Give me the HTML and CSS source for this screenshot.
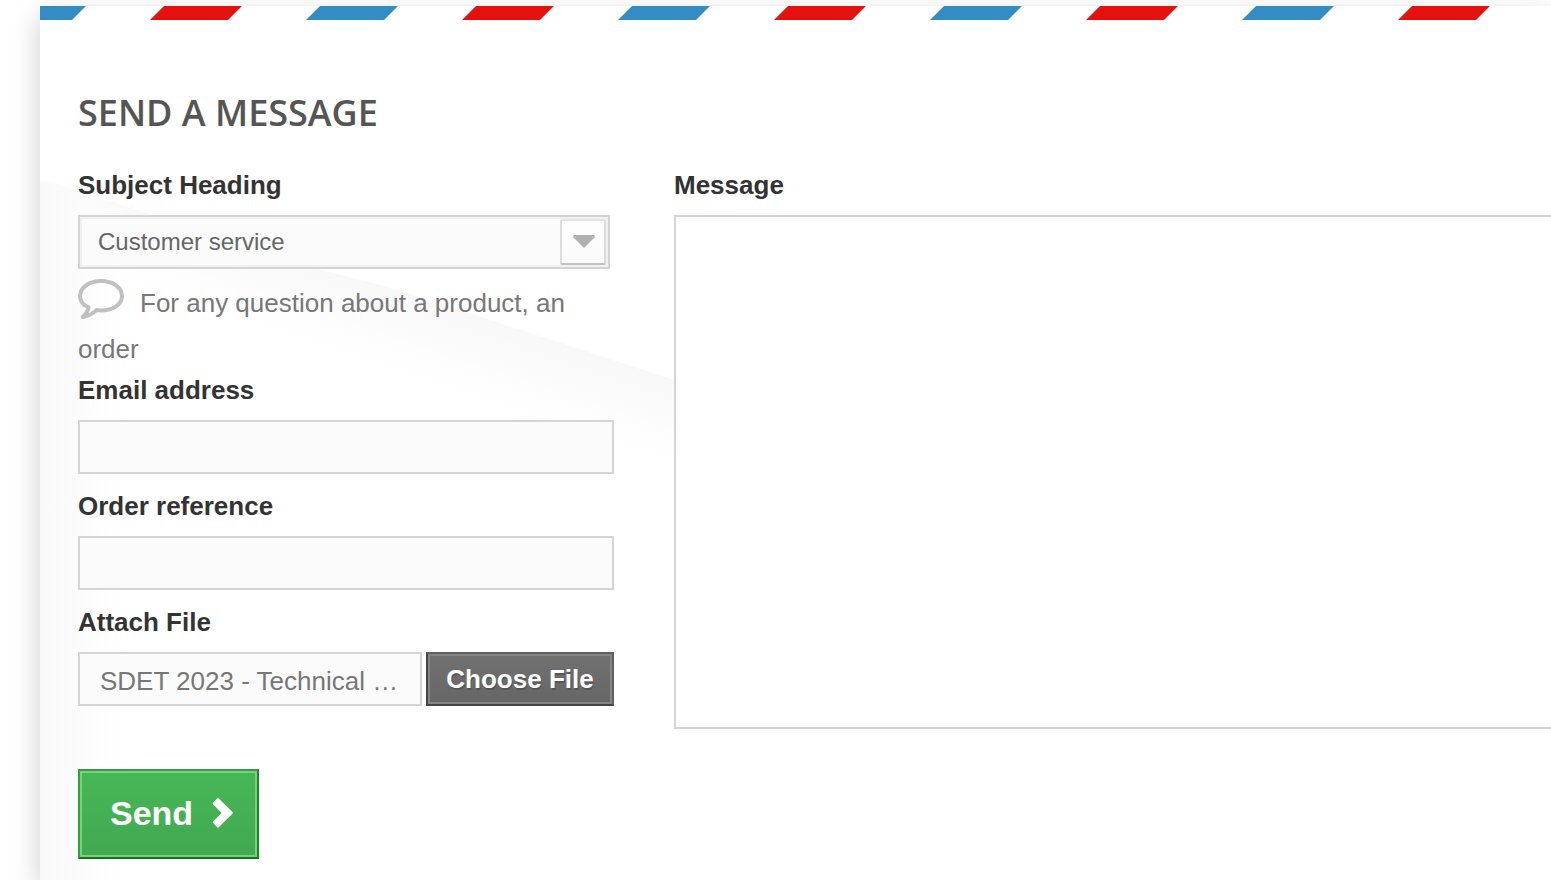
FILE: index.html
```html
<!DOCTYPE html>
<html lang="en">
<head>
<meta charset="utf-8">
<title>Send a message</title>
<link rel="stylesheet" href="styles.css">
</head>
<body>
<form class="panel">
  <svg class="sheen" width="720" height="699" aria-hidden="true">
    <defs>
      <linearGradient id="band" gradientUnits="userSpaceOnUse" x1="360" y1="110" x2="333" y2="192">
        <stop offset="0" stop-color="#f8f8f8"/><stop offset=".5" stop-color="#fcfcfc"/><stop offset="1" stop-color="#fefefe" stop-opacity="0"/>
      </linearGradient>
      <linearGradient id="edge"><stop offset="0" stop-color="#f9f9f9"/><stop offset=".5" stop-color="#fcfcfc"/><stop offset="1" stop-color="#fefefe" stop-opacity="0"/></linearGradient>
    </defs>
    <path d="M0 0C20 1 60 18 112 34C170 53 220 72 272 87C320 98 350 106 389 119L634 199L720 230V699H0Z" fill="url(#band)"/>
    <path d="M0 0C20 1 60 18 90 27V699H0Z" fill="url(#edge)"/>
  </svg>
  <svg class="stripes" width="100%" height="14" aria-hidden="true">
    <defs>
      <pattern id="airmail" x="-46" y="0" width="312" height="14" patternUnits="userSpaceOnUse">
        <path d="M14 0H92L78 14H0Z" fill="#338dc4"/>
        <path d="M170 0H248L234 14H156Z" fill="#e5110e"/>
      </pattern>
    </defs>
    <rect width="100%" height="14" fill="url(#airmail)"/>
  </svg>
  <h3 class="title">Send a message</h3>
  <div class="columns">
    <div class="fields">
      <label class="label">Subject Heading</label>
      <div class="select">
        <span>Customer service</span>
        <span class="select-button"><svg width="22" height="13" viewBox="0 0 22 13"><path d="M1 0H21L22 2L11 13L0 2Z" fill="#b0b0b0"/></svg></span>
      </div>
      <p class="help"><svg class="comment" width="46" height="40" viewBox="0 0 46 40"><path d="M23 2C35 2 44 8.400 44 16.900C44 25.400 35 31.400 23 31.400C21.500 31.400 20 31.300 18.500 31.100C14.500 34.900 10 37.200 4.800 38C7.500 35.400 10 32.500 10.500 28.300C5 25.800 2 22 2 16.900C2 8.400 11 2 23 2Z" fill="none" stroke="#c0c0c0" stroke-width="4" stroke-linejoin="round"/></svg>For any question about a product, an order</p>
      <label class="label">Email address</label>
      <div class="input"></div>
      <label class="label">Order reference</label>
      <div class="input"></div>
      <label class="label">Attach File</label>
      <div class="upload">
        <div class="filename">SDET 2023 - Technical …</div>
        <button type="button" class="choose">Choose File</button>
      </div>
    </div>
    <div class="message">
      <label class="label">Message</label>
      <div class="textarea"></div>
    </div>
  </div>
  <button type="button" class="send"><span>Send</span><svg width="22" height="32" viewBox="0 0 22 32"><path d="M1 5.700L5.200 1.500Q6 .7 6.800 1.500L20.400 15.100Q21.200 15.900 20.400 16.700L6.800 30.300Q6 31.100 5.200 30.300L1 26.100Q.2 25.300 1 24.500L9.600 15.900L1 7.300Q.2 6.500 1 5.700Z" fill="#fff"/></svg></button>
</form>
</body>
</html>
```
FILE: styles.css
```css
* { box-sizing: border-box; }

html, body { height: 100%; overflow: hidden; }

body {
  margin: 0;
  padding: 6px 0 0 40px;
  background: #fff;
  color: #777;
  font: 26px/36px "Liberation Sans", Arial, sans-serif;
}

.panel {
  position: relative;
  isolation: isolate;
  height: 100%;
  background: #fff;
  box-shadow: 0 10px 26px rgba(0, 0, 0, .2), 0 40px 26px -10px rgba(0, 0, 0, .2);
  box-shadow: 0 10px 26px rgba(0, 0, 0, .2);
}

.sheen { position: absolute; left: 0; top: 175px; z-index: -1; }

.stripes { display: block; }

.title {
  margin: 68px 0 0 38px;
  height: 79px;
  color: #555;
  font: 600 36px/50px "Open Sans", sans-serif;
  text-transform: uppercase;
}

.columns { display: flex; gap: 60px; padding-left: 38px; }

.fields { flex: none; width: 536px; }

.message { flex: 1; }

.label {
  display: block;
  margin-bottom: 12px;
  color: #333;
  font-weight: bold;
}

.select {
  display: flex;
  align-items: center;
  justify-content: space-between;
  width: 532px;
  height: 54px;
  padding: 0 2px 0 18px;
  border: 2px solid #d4d4d4;
  box-shadow: inset 0 0 0 2px #f0f0f0;
  background: #fbfbfb;
  color: #666;
  font-size: 24px;
}

.select-button {
  display: flex;
  align-items: center;
  justify-content: center;
  width: 46px;
  height: 46px;
  padding: 0 0 2px 2px;
  border: 2px solid #dcdcdc;
  border-top-color: #e4e4e4;
  border-bottom-color: #c1c1c1;
  border-radius: 2px;
  background: linear-gradient(#fff, #fafafa);
}

.help { margin: 11px 0 0; line-height: 46px; }

.comment { margin-right: 16px; vertical-align: -7px; display: inline-block; height: 40px; margin-top: -10px; }

.input {
  height: 54px;
  margin-bottom: 14px;
  border: 2px solid #d6d4d4;
  background: #fbfbfb;
}

.upload { display: flex; gap: 4px; }

.filename {
  width: 344px;
  height: 54px;
  padding-left: 20px;
  border: 2px solid #d6d4d4;
  background: #fbfbfb;
  line-height: 54px;
  white-space: nowrap;
}

.choose {
  width: 188px;
  height: 54px;
  padding: 0;
  border: 2px solid;
  border-color: #5f5f5f #606060 #444 #444;
  background: linear-gradient(#717171, #666);
  box-shadow: inset 0 0 0 2px #858585;
  color: #fff;
  font: bold 26px/50px "Liberation Sans", Arial, sans-serif;
  text-shadow: 1px 2px rgba(0, 0, 0, .2);
}

.textarea {
  height: 514px;
  border: 2px solid #d6d4d4;
  border-right: 0;
  background: #fff;
}

.send {
  display: flex;
  align-items: center;
  gap: 19px;
  width: 181px;
  height: 90px;
  margin: 40px 0 0 38px;
  padding: 0 0 2px 30px;
  border: 2px solid;
  border-color: #399a49 #247f32 #1a6d27 #399a49;
  background: linear-gradient(#46b856, #42a851);
  box-shadow: inset 0 0 0 2px #74d578;
  color: #fff;
  font: bold 34px/44px "Liberation Sans", Arial, sans-serif;
}
```
